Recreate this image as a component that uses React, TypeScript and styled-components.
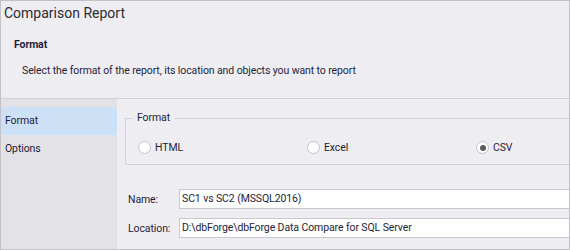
import styled, { createGlobalStyle } from 'styled-components';

const GlobalStyle = createGlobalStyle`
  html, body {
    margin: 0;
    padding: 0;
    background: #ffffff;
  }
  * {
    box-sizing: border-box;
  }
`;

const Frame = styled.div`
  width: 570px;
  height: 250px;
  border: 1px solid #c2c2c6;
  background: #eeeef2;
  display: flex;
  flex-direction: column;
  overflow: hidden;
  font-family: Roboto, 'Liberation Sans', sans-serif;
  font-size: 10.5px;
  letter-spacing: -0.1px;
  color: #1e1e3a;
`;

const Header = styled.div`
  height: 98px;
  flex-shrink: 0;
  border-bottom: 1px solid #d0d0dc;
  padding-left: 3px;
`;

const Title = styled.div`
  font-size: 14px;
  letter-spacing: 0;
  line-height: 20px;
  padding-top: 2px;
  color: #2c2c34;
`;

const Section = styled.div`
  font-weight: bold;
  margin: 15px 0 0 10px;
  line-height: 14px;
`;

const Hint = styled.div`
  margin: 12px 0 0 18px;
  line-height: 14px;
`;

const Body = styled.div`
  flex: 1;
  display: flex;
  min-height: 0;
`;

const Sidebar = styled.div`
  width: 116px;
  flex-shrink: 0;
  background: #e2e2e7;
  padding-top: 8px;
`;

const NavItem = styled.div<{ $active?: boolean }>`
  height: 28px;
  line-height: 28px;
  padding-left: 4px;
  background: ${(p) => (p.$active ? '#cce0f6' : 'transparent')};
`;

const Main = styled.div`
  flex: 1;
  padding: 19px 0 0 8px;
  overflow: hidden;
`;

const GroupBox = styled.div`
  position: relative;
  width: 480px;
  height: 47px;
  border: 1px solid #d2d2dc;
  padding: 12px 0 0 12px;
  display: flex;
  align-items: center;
`;

const Legend = styled.span`
  position: absolute;
  top: -8px;
  left: 7px;
  padding: 0 4px;
  line-height: 14px;
  background: #eeeef2;
`;

const RadioOption = styled.label<{ $width: number }>`
  width: ${(p) => p.$width}px;
  flex-shrink: 0;
  display: flex;
  align-items: center;
  gap: 4px;
`;

const RadioCircle = styled.span<{ $checked?: boolean }>`
  width: 13px;
  height: 13px;
  border-radius: 50%;
  border: 1px solid #c6c6ce;
  background: radial-gradient(circle at 50% 40%, #ffffff 55%, #eeeef2 100%);
  display: flex;
  align-items: center;
  justify-content: center;
  &::after {
    content: '';
    width: 6px;
    height: 6px;
    border-radius: 50%;
    background: ${(p) => (p.$checked ? '#5c5c60' : 'transparent')};
  }
`;

const Fields = styled.div`
  margin-top: 24px;
  display: flex;
  flex-direction: column;
  gap: 9px;
`;

const FieldRow = styled.div`
  display: flex;
  align-items: center;
  margin-left: 3px;
`;

const FieldLabel = styled.span`
  width: 51px;
  flex-shrink: 0;
`;

const TextInput = styled.div`
  width: 420px;
  flex-shrink: 0;
  height: 20px;
  line-height: 18px;
  background: #ffffff;
  border: 1px solid #c8c8d0;
  padding-left: 2px;
  white-space: nowrap;
`;

const formats = [
  { label: 'HTML', width: 169 },
  { label: 'Excel', width: 169 },
  { label: 'CSV', width: 100, checked: true },
];

export default function App() {
  return (
    <>
      <GlobalStyle />
      <Frame>
        <Header>
          <Title>Comparison Report</Title>
          <Section>Format</Section>
          <Hint>Select the format of the report, its location and objects you want to report</Hint>
        </Header>
        <Body>
          <Sidebar>
            <NavItem $active>Format</NavItem>
            <NavItem>Options</NavItem>
          </Sidebar>
          <Main>
            <GroupBox>
              <Legend>Format</Legend>
              {formats.map((f) => (
                <RadioOption key={f.label} $width={f.width}>
                  <RadioCircle $checked={f.checked} />
                  {f.label}
                </RadioOption>
              ))}
            </GroupBox>
            <Fields>
              <FieldRow>
                <FieldLabel>Name:</FieldLabel>
                <TextInput>SC1 vs SC2 (MSSQL2016)</TextInput>
              </FieldRow>
              <FieldRow>
                <FieldLabel>Location:</FieldLabel>
                <TextInput>D:\dbForge\dbForge Data Compare for SQL Server</TextInput>
              </FieldRow>
            </Fields>
          </Main>
        </Body>
      </Frame>
    </>
  );
}
